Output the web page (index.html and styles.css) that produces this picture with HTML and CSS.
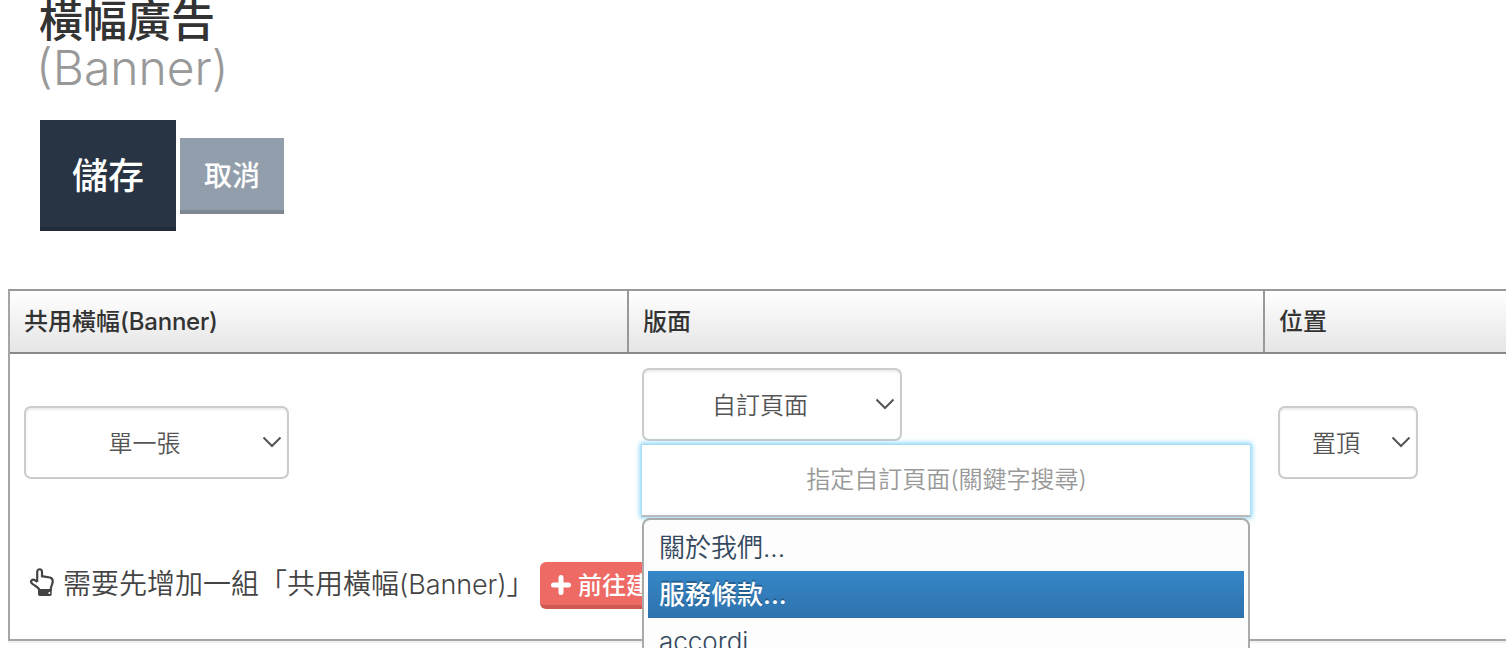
FILE: index.html
```html
<!DOCTYPE html>
<html lang="zh-Hant">
<head>
    <meta charset="UTF-8">
    <meta name="viewport" content="width=device-width, initial-scale=1.0">
    <title>橫幅廣告(Banner)</title>
    <link rel="stylesheet" href="styles.css">
</head>
<body>
    <header>
        <h1>橫幅廣告<small>(Banner)</small></h1>
        <div class="actions">
            <button class="btn btn-save">儲存</button>
            <button class="btn btn-cancel">取消</button>
        </div>
    </header>

    <main class="banner-table">
        <div class="table-head">
            <div class="th"><span>共用橫幅<span class="latin">(Banner)</span></span></div>
            <div class="th">版面</div>
            <div class="th">位置</div>
        </div>

        <div class="table-row">
            <div class="td">
                <div class="select select-type">
                    <span>單一張</span>
                    <svg viewBox="0 0 20 12"><path d="M1.5 1.5 L10 10 L18.5 1.5"/></svg>
                </div>
            </div>
            <div class="td td-page">
                <div class="select select-page">
                    <span>自訂頁面</span>
                    <svg viewBox="0 0 20 12"><path d="M1.5 1.5 L10 10 L18.5 1.5"/></svg>
                </div>
                <div class="search">
                    <span class="placeholder">指定自訂頁面(關鍵字搜尋)</span>
                    <ul class="dropdown">
                        <li>關於我們...</li>
                        <li class="active">服務條款...</li>
                        <li>accordi...</li>
                    </ul>
                </div>
            </div>
            <div class="td">
                <div class="select select-position">
                    <span>置頂</span>
                    <svg viewBox="0 0 20 12"><path d="M1.5 1.5 L10 10 L18.5 1.5"/></svg>
                </div>
            </div>
        </div>

        <div class="hint">
            <svg class="hand" viewBox="0 0 24 28">
                <path class="outline" d="M7.2 14V4C7.2 .3 12 .3 12 4V8.2L19.8 9.5C22.2 10 22.9 11.4 22.7 13.8C22.3 17 20.6 18.8 20.6 22H9.2C9 19 5.2 18.4 2.3 15.8C-.4 13.2 2.2 10.4 5 12.2L7.2 14"/>
                <path class="cuff" d="M8 21.5H21.7V26.3Q21.7 28 20 28H9.7Q8 28 8 26.3Z"/>
                <circle cx="19.3" cy="25" r="1"/>
            </svg>
            <span class="hint-text">需要先增加一組「共用橫幅<span class="latin">(Banner)</span>」</span>
            <a class="btn-create" href="#">
                <svg viewBox="0 0 20 20"><path d="M10 2.5V17.5M2.5 10H17.5"/></svg>
                <span>前往建立</span>
            </a>
        </div>
    </main>
</body>
</html>
```

FILE: styles.css
```css
/* Global Styles */
* {
    box-sizing: border-box;
}

html {
    overflow: hidden;
}

body {
    margin: 0;
    height: 648px;
    overflow: hidden;
    background: #fff;
    color: #333;
    font-family: Inter, "Noto Sans CJK TC", sans-serif;
}

/* Page Header */
header {
    height: 289px;
    padding-left: 40px;
}

h1 {
    margin: 0 0 0 -1px;
    font-size: 44px;
    font-weight: 500;
    line-height: 42px;
}

h1 small {
    display: block;
    margin-left: -3px;
    color: #999;
    font-size: 48px;
    font-weight: 300;
    line-height: 52px;
}

.actions {
    display: flex;
    align-items: center;
    gap: 4px;
    height: 111px;
    margin-top: 26px;
}

.btn {
    border: none;
    padding: 0;
    color: #fff;
    font-family: inherit;
    font-weight: 500;
}

.btn-save {
    width: 136px;
    height: 111px;
    padding-bottom: 2px;
    border-bottom: 4px solid #202b39;
    background: #283443;
    font-size: 36px;
}

.btn-cancel {
    width: 104px;
    height: 76px;
    border-bottom: 4px solid #7d8893;
    background: #929eab;
    font-size: 28px;
}

/* Table */
.banner-table {
    width: 1600px;
    height: 352px;
    margin-left: 8px;
    border: 2px solid #a5a5a5;
    border-top-color: #999;
    box-shadow: 0 2px 0 #f0f0f0;
}

.table-head,
.table-row {
    display: grid;
    grid-template-columns: 617px 636px 1fr;
}

.table-head {
    height: 63px;
    border-bottom: 2px solid #888;
    background: linear-gradient(#fff, #e5e5e5);
}

.th {
    display: flex;
    align-items: center;
    padding: 0 0 4px 14px;
    font-size: 24px;
    font-weight: 500;
}

.th .latin {
    letter-spacing: -0.2px;
}

.th + .th {
    border-left: 2px solid #999;
}

.table-row {
    height: 177px;
}

.td {
    display: flex;
    align-items: center;
    padding: 14px;
}

.td-page {
    flex-direction: column;
    align-items: flex-start;
    gap: 3px;
    padding: 14px 12px 13px 14px;
}

/* Select Boxes */
.select {
    display: flex;
    align-items: center;
    height: 73px;
    padding-right: 5px;
    border: 2px solid #ccc;
    border-radius: 7px;
    box-shadow: inset 0 2px 2px rgba(0, 0, 0, 0.075);
    color: #555;
    font-size: 24px;
    font-weight: 350;
}

.select span {
    flex: 1;
    padding: 0 0 3px 1px;
    text-align: center;
}

.select svg {
    width: 20px;
    height: 12px;
    margin-bottom: 1px;
    fill: none;
    stroke: #555;
    stroke-width: 2;
}

.select-type {
    width: 265px;
}

.select-page {
    width: 260px;
    margin-left: 1px;
}

.select-position {
    width: 140px;
    margin-left: 1px;
}

/* Search Input */
.search {
    position: relative;
    width: 610px;
    height: 73px;
    border: 1px solid #a9def5;
    border-bottom: 2px solid #bbb;
    box-shadow: 0 0 5px 1px #7fd3f7;
    text-align: center;
}

.placeholder {
    padding-left: 1px;
    color: #999;
    font-size: 24px;
    font-weight: 350;
    line-height: 70px;
}

.dropdown {
    position: absolute;
    top: 73px;
    left: 0;
    z-index: 1;
    width: 608px;
    height: 240px;
    margin: 0;
    padding: 4px;
    border: 2px solid #aaa;
    border-radius: 8px;
    background: #fdfdfd;
    list-style: none;
    text-align: left;
}

.dropdown li {
    height: 47px;
    padding-left: 11px;
    color: #34495e;
    font-size: 26px;
    font-weight: 350;
    line-height: 48px;
}

.dropdown .active {
    background: linear-gradient(#3687c7, #2e72ad);
    color: #fff;
    font-weight: 500;
    text-shadow: 0 -2px 0 rgba(0, 0, 0, 0.25);
}

/* Hint Row */
.hint {
    display: flex;
    align-items: center;
    height: 108px;
    padding-left: 20px;
    color: #444;
    font-size: 28px;
    font-weight: 350;
}

.hand {
    width: 24px;
    height: 28px;
    margin: 0 9px 7px 0;
}

.hand .outline {
    fill: none;
    stroke: #444;
    stroke-width: 2.2;
}

.hand .cuff {
    fill: #444;
}

.hand circle {
    fill: #fff;
}

.hint-text {
    width: 461px;
    margin-right: 16px;
    padding-bottom: 7px;
    white-space: nowrap;
}

.hint-text .latin {
    font-size: 27px;
    letter-spacing: -0.1px;
}

.btn-create {
    display: flex;
    align-items: center;
    width: 150px;
    height: 47px;
    padding-left: 11px;
    border-bottom: 4px solid #cf5853;
    border-radius: 6px;
    background: #ee6a65;
    color: #fff;
    font-size: 24px;
    font-weight: 500;
    text-decoration: none;
    white-space: nowrap;
}

.btn-create svg {
    width: 20px;
    height: 20px;
    margin: 3px 7px 0 0;
    stroke: #fff;
    stroke-width: 5;
    stroke-linecap: round;
}
```
